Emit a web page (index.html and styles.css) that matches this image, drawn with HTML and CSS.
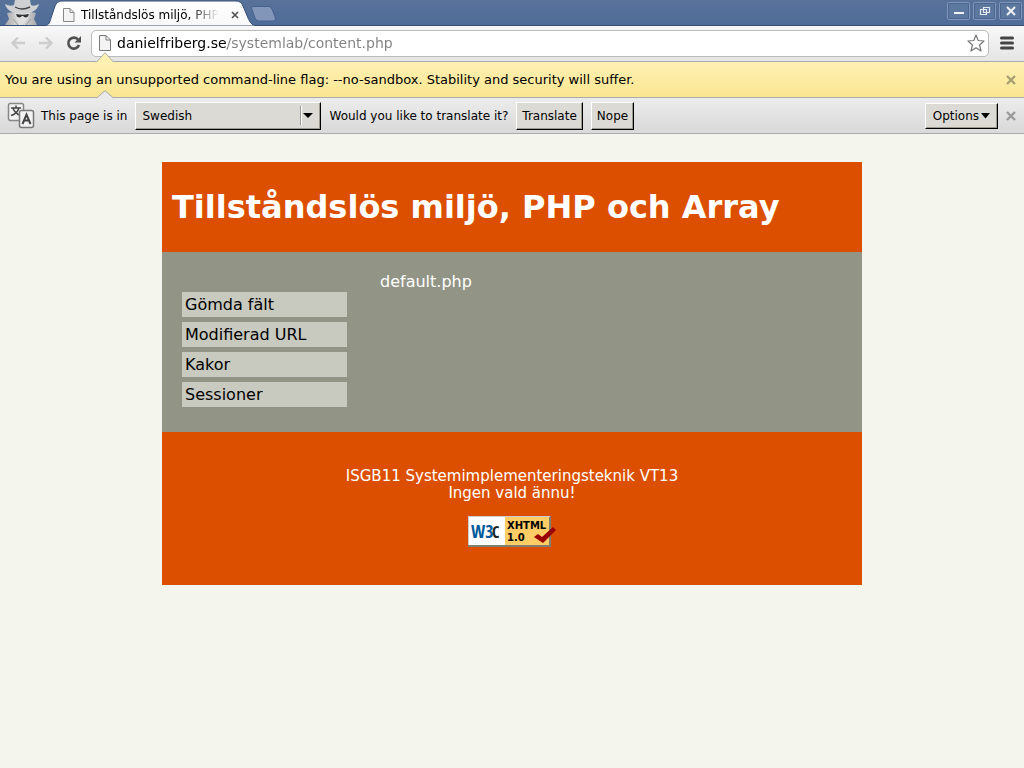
FILE: index.html
```html
<!DOCTYPE html>
<html lang="sv">
<head>
<meta charset="utf-8">
<title>Tillståndslös miljö, PHP och Array</title>
<link rel="stylesheet" href="styles.css">
</head>
<body>
<div class="browser" lang="en">
  <div class="tabstrip">
    <svg class="incognito" width="36" height="26" viewBox="0 0 36 26" aria-hidden="true">
      <defs><linearGradient id="coat" x1="0" y1="0" x2="1" y2="0"><stop offset="0" stop-color="#a8a8ac"/><stop offset=".5" stop-color="#e2e2e2"/><stop offset="1" stop-color="#a8a8ac"/></linearGradient></defs>
      <path d="M1 25L5 19L3 13L10 12H27L32 13L30 19L33 25Z" fill="url(#coat)"/>
      <path d="M11 11Q11 21 18 24Q25 21 26 11Z" fill="#e0e0e0"/>
      <path d="M12 14Q18 15.500 25 14L24 16.500Q21 18.500 19 16H18Q16 18.500 13 16.500Z" fill="#333"/>
      <path d="M1 4Q6 7 10 5L11 0H26L27 5Q30 7 35 4Q34 9 28 12Q18 15 8 12Q2 9 1 4Z" fill="#cfd0d2"/>
      <path d="M11 7Q18 11 26 7" fill="none" stroke="#444" stroke-width="1.400"/>
      <path d="M9 19L14 25M27 19L22 25" stroke="#999"/>
    </svg>
    <div class="tab">
      <svg class="tab-shape" viewBox="0 0 216 26" width="216" height="26" aria-hidden="true">
        <defs><linearGradient id="tabfill" x1="0" y1="0" x2="0" y2="1"><stop offset="0" stop-color="#fff"/><stop offset="1" stop-color="#f8f8f8"/></linearGradient></defs>
        <path d="M0 26C4 25 5 22 6 18L10 6Q12 1 17 1H191Q196 1 198 6L203 18C205 22 206 25 212 26Z" fill="url(#tabfill)" stroke="#354e78"/>
      </svg>
      <div class="tab-content">
        <svg width="12" height="14" viewBox="0 0 12 14" aria-hidden="true"><path d="M.5.5H7L11 4.500V13.500H.5ZM7 .5V4.500H11" fill="#f4f4f4" stroke="#888"/></svg>
        <span class="tab-title">Tillståndslös miljö, PHP och Array</span>
        <button class="icon-button" aria-label="Close tab"><svg width="8" height="8" viewBox="0 0 8 8"><path d="M1 1L7 7M7 1L1 7" stroke="#555" stroke-width="1.700"/></svg></button>
      </div>
    </div>
    <button class="icon-button new-tab" aria-label="New tab"><svg width="26" height="16" viewBox="0 0 26 16"><path d="M1.500.5H18Q20 .5 21 3L24.500 12Q25 15 22 15H8Q5 15 4 12L.8 3Q.3.500 1.500.5Z" fill="#8196b8" stroke="#46618e"/></svg></button>
    <div class="window-controls">
      <button aria-label="Minimise"><svg width="12" height="12" viewBox="0 0 12 12"><path d="M1 8H11" stroke="#f0f3f8" stroke-width="2"/></svg></button>
      <button aria-label="Restore"><svg width="12" height="12" viewBox="0 0 12 12"><path d="M4.500 2.500H10.500V7.500H4.500ZM1.500 4.500H7.500V9.500H1.500Z" fill="none" stroke="#e5eaf2" stroke-width="1.200"/></svg></button>
      <button aria-label="Close window"><svg width="12" height="12" viewBox="0 0 12 12"><path d="M2 2L10 10M10 2L2 10" stroke="#f0f3f8" stroke-width="2"/></svg></button>
    </div>
  </div>

  <div class="toolbar">
    <button class="icon-button" aria-label="Back" disabled><svg width="16" height="14" viewBox="0 0 16 14"><path d="M15 7H3M8 1.500L2.500 7L8 12.500" fill="none" stroke="#ccc" stroke-width="2.400"/></svg></button>
    <button class="icon-button" aria-label="Forward" disabled><svg width="16" height="14" viewBox="0 0 16 14"><path d="M1 7H13M8 1.500L13.500 7L8 12.500" fill="none" stroke="#ccc" stroke-width="2.400"/></svg></button>
    <button class="icon-button" aria-label="Reload"><svg width="16" height="16" viewBox="0 0 16 16"><path d="M12 4.500A5.500 5.500 0 1 0 13 10" fill="none" stroke="#505050" stroke-width="2.600"/><path d="M15 1V7.500H8.500Z" fill="#505050"/></svg></button>
    <div class="omnibox">
      <svg width="12" height="16" viewBox="0 0 12 16" aria-hidden="true"><path d="M.5.5H7L11.500 5V15.500H.5ZM7 .5V5H11.500" fill="#f4f4f4" stroke="#777"/></svg>
      <input class="address" type="text" aria-label="Address" value="danielfriberg.se/systemlab/content.php">
      <button class="icon-button" aria-label="Bookmark"><svg width="18" height="18" viewBox="0 0 18 18"><path d="M9 1L11.200 6.500L17 7L12.600 11L14 17L9 13.800L4 17L5.400 11L1 7L6.800 6.500Z" fill="#fff" stroke="#777" stroke-width="1.200" stroke-linejoin="round"/></svg></button>
    </div>
    <button class="icon-button" aria-label="Menu"><svg width="14" height="14" viewBox="0 0 14 14"><path d="M1.500 2H12.500M1.500 7H12.500M1.500 12H12.500" stroke="#444" stroke-width="3" stroke-linecap="round"/></svg></button>
  </div>

  <div class="infobar warning">
    <svg class="notch" width="18" height="11" viewBox="0 0 18 11" aria-hidden="true"><path d="M0 10.500L9 .7L18 10.500V11H0Z" fill="#fff0b1"/><path d="M.5 10L9 .7L17.500 10" fill="none" stroke="#aaa"/></svg>
    <span>You are using an unsupported command-line flag: --no-sandbox. Stability and security will suffer.</span>
    <button class="icon-button dismiss" aria-label="Dismiss warning"><svg width="10" height="10" viewBox="0 0 10 10"><path d="M1 1L9 9M9 1L1 9" stroke="#a69d73" stroke-width="2.300"/></svg></button>
  </div>

  <div class="infobar translate">
    <svg class="notch" width="18" height="9" viewBox="0 0 18 9" aria-hidden="true"><path d="M0 8.500L9 .7L18 8.500V9H0Z" fill="#eaeaea"/><path d="M.5 8L9 .7L17.500 8" fill="none" stroke="#aaa"/></svg>
    <svg class="translate-icon" width="28" height="28" viewBox="0 0 28 28" aria-hidden="true">
      <rect x="1.500" y="1.500" width="15" height="17" rx="2" fill="#f2f2f2" stroke="#888" stroke-width="1.500"/>
      <path d="M4 6H14M9 3.500V6M6 6Q8 12 14 13.500M12 6Q10 12 4 13.500" fill="none" stroke="#444" stroke-width="1.500"/>
      <rect x="12.500" y="8.500" width="14" height="17" rx="2" fill="#f2f2f2" stroke="#777" stroke-width="1.500"/>
      <path d="M15.500 22L19.500 12.500L23.500 22M17 18.500H22" fill="none" stroke="#444" stroke-width="2"/>
    </svg>
    <label for="language">This page is in</label>
    <span class="select-wrap"><select id="language"><option>Swedish</option></select></span>
    <span>Would you like to translate it?</span>
    <button class="push">Translate</button>
    <button class="push">Nope</button>
    <button class="push options">Options<svg width="9" height="6" viewBox="0 0 9 6" aria-hidden="true"><path d="M0 0H9L4.500 5.500Z"/></svg></button>
    <button class="icon-button" aria-label="Dismiss translation"><svg width="10" height="10" viewBox="0 0 10 10"><path d="M1 1L9 9M9 1L1 9" stroke="#999" stroke-width="2.300"/></svg></button>
  </div>
</div>

<div class="page">
  <header class="banner"><h1>Tillståndslös miljö, PHP och Array</h1></header>
  <div class="body">
    <nav>
      <ul class="menu">
        <li><a href="#">Gömda fält</a></li>
        <li><a href="#">Modifierad URL</a></li>
        <li><a href="#">Kakor</a></li>
        <li><a href="#">Sessioner</a></li>
      </ul>
    </nav>
    <main>default.php</main>
  </div>
  <footer class="footer">
    <p>ISGB11 Systemimplementeringsteknik VT13<br>Ingen vald ännu!</p>
    <a href="#" aria-label="Valid XHTML 1.0">
      <svg class="badge" width="88" height="31" viewBox="0 0 88 31">
        <path d="M0 0H83V31H0Z" fill="#7f7f70"/><path d="M0 0H82V1H1V29H0Z" fill="#ccc"/>
        <path d="M1 1H37V29H1Z" fill="#fff"/><path d="M37 1H81V29H37Z" fill="#fc6"/>
        <text class="w3" x="3" y="22">W3</text><text class="w3 w3-c" x="24" y="22">C</text>
        <text x="39" y="13">XHTML</text><text x="39" y="25">1.0</text>
        <path d="M66 21L70 18L74 21L85 11L88 14L75 27Z" fill="#900"/>
      </svg>
    </a>
  </footer>
</div>
</body>
</html>
```
FILE: styles.css
```css
* { box-sizing: border-box; }

body {
  margin: 0;
  background: #f4f5ed;
  font: 16px/19px "DejaVu Sans", sans-serif;
}

button, input, select { font: inherit; color: inherit; }
svg { display: block; flex: none; }

.browser { font-size: 12px; line-height: 16px; color: #000; }

.icon-button {
  flex: none;
  padding: 0;
  border: 0;
  background: none;
}

.tabstrip {
  display: flex;
  height: 26px;
  padding: 0 2px 0 4px;
  background: linear-gradient(#587299, #4f6d99);
  border-bottom: 1px solid #354e78;
}

.tab {
  display: grid;
  grid-template-columns: 100%;
  width: 216px;
  margin-left: 5px;
}

.tab-shape, .tab-content { grid-area: 1 / 1; }

.tab-content {
  display: flex;
  align-items: center;
  gap: 6px;
  height: 26px;
  padding: 3px 22px 0 18px;
}

.tab-title {
  flex: 1;
  overflow: hidden;
  white-space: nowrap;
  mask-image: linear-gradient(90deg, #000 108px, transparent 138px);
}

.new-tab { align-self: start; margin: 6px 0 0 -10px; }

.window-controls {
  display: flex;
  gap: 3px;
  margin: 2px 0 0 auto;
}

.window-controls button {
  display: grid;
  place-items: center;
  width: 23px;
  height: 18px;
  padding: 0;
  background: #5c789f;
  border: 1px solid #8196b8;
  border-radius: 2px;
  outline: 1px solid #496590;
  outline-offset: -2px;
}

.toolbar {
  display: flex;
  align-items: center;
  gap: 12px;
  height: 36px;
  padding: 0 10px 1px;
  background: linear-gradient(#f8f8f8, #e5e5e5);
  border-bottom: 1px solid #aaa;
}

.omnibox {
  display: flex;
  flex: 1;
  align-items: center;
  gap: 6px;
  height: 27px;
  margin: 0 -1px 0 -3px;
  padding: 0 3px 0 7px;
  background: #fff;
  border: 1px solid #bbb;
  border-radius: 5px;
}

.address {
  flex: 1;
  min-width: 0;
  padding: 0;
  border: 0;
  outline: 0;
  font-size: 14px;
  line-height: 20px;
  color: transparent;
  background: linear-gradient(90deg, #000 110px, #808080 110px);
  background-clip: text;
}

.infobar {
  position: relative;
  display: flex;
  align-items: center;
  gap: 8px;
  height: 36px;
  padding: 0 8px 0 5px;
  border-bottom: 1px solid #aaa;
}

.warning { font-size: 13px; background: linear-gradient(#fff0b3, #fae691); }
.translate { background: linear-gradient(#ececec, #d9d9d9); }
.dismiss { margin-left: auto; }

.notch {
  position: absolute;
  bottom: 100%;
  left: 96px;
  margin-bottom: -1px;
}

.translate-icon { margin: 0 -2px 0 2px; }

.select-wrap { position: relative; }

.select-wrap::before {
  content: "";
  position: absolute;
  top: 4px;
  right: 19px;
  bottom: 5px;
  border-left: 1px solid #999;
  border-right: 1px solid #fff;
}

.select-wrap::after {
  content: "";
  position: absolute;
  top: 11px;
  right: 8px;
  border: 5px solid transparent;
  border-top-color: #000;
  border-bottom: 0;
  pointer-events: none;
}

select, .push {
  background: #dcdad5;
  border: 1px solid;
  border-color: #fff #000 #000 #fff;
  border-radius: 0;
  box-shadow: inset -1px -1px #9c9a8e;
}

select {
  display: block;
  appearance: none;
  width: 186px;
  height: 28px;
  padding: 0 6px;
}

.push {
  display: flex;
  align-items: center;
  gap: 2px;
  height: 28px;
  padding: 0 5px;
}

.options { height: 26px; margin-left: auto; padding: 0 7px; }

.page {
  width: 100%;
  max-width: 700px;
  margin: 28px auto 0;
  color: #fff;
}

.banner, .footer { background: #dc4f00; }
.banner { padding: 26px 10px 25px; }
h1 { margin: 0; font-size: 32px; line-height: 39px; }

.body {
  display: grid;
  grid-template-columns: 165px 1fr;
  gap: 33px;
  min-height: 180px;
  padding: 20px;
  background: #929486;
}

.menu {
  display: grid;
  gap: 5px;
  margin: 20px 0 0;
  padding: 0;
  list-style: none;
}

.menu a {
  display: block;
  padding: 3px;
  background: #c8c9bf;
  color: #000;
  text-decoration: none;
}

.footer {
  display: flex;
  flex-direction: column;
  align-items: center;
  gap: 14px;
  padding: 36px 10px 38px;
  font-size: 15px;
  line-height: 17px;
  text-align: center;
}

.footer p { margin: 0; }
.badge { font: bold 10px "DejaVu Sans", sans-serif; }
.w3 { font: 19px "Open Sans Condensed", "DejaVu Sans Condensed", "Liberation Sans Narrow", sans-serif; font-size: 18px; fill: #005a9c; }
.w3-c { font-size: 16px; fill: #222; }
```
